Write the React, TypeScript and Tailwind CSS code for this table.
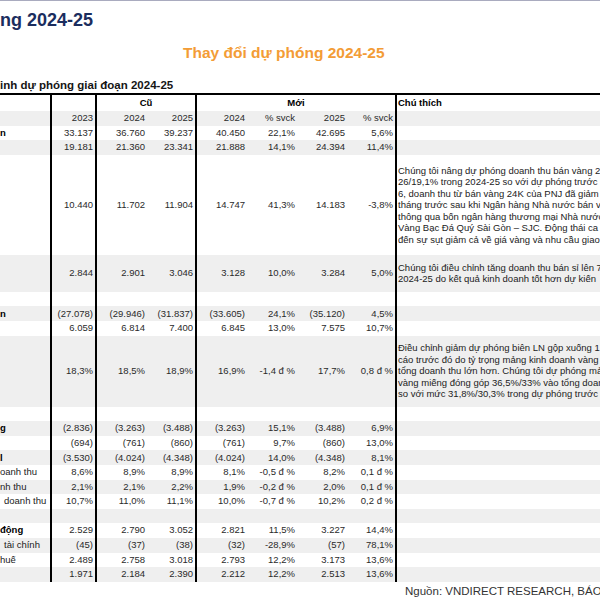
import React from "react";

type Row = {
    label?: string;
    bold?: boolean;
    indent?: boolean;
    vals?: string[];
    note?: string[];
    h?: string;
};

const rows: Row[] = [
    { label: "n", bold: true, vals: ["33.137", "36.760", "39.237", "40.450", "22,1%", "42.695", "5,6%"] },
    { vals: ["19.181", "21.360", "23.341", "21.888", "14,1%", "24.394", "11,4%"] },
    {
        vals: ["10.440", "11.702", "11.904", "14.747", "41,3%", "14.183", "-3,8%"],
        h: "h-[100px]",
        note: [
            "Chúng tôi nâng dự phóng doanh thu bán vàng 24",
            "26/19,1% trong 2024-25 so với dự phóng trước",
            "6, doanh thu từ bán vàng 24K của PNJ đã giảm",
            "tháng trước sau khi Ngân hàng Nhà nước bán v",
            "thông qua bốn ngân hàng thương mại Nhà nước",
            "Vàng Bạc Đá Quý Sài Gòn – SJC. Động thái ca",
            "đến sự sụt giảm cả về giá vàng và nhu cầu giao",
        ],
    },
    {
        vals: ["2.844", "2.901", "3.046", "3.128", "10,0%", "3.284", "5,0%"],
        h: "h-[37px]",
        note: [
            "Chúng tôi điều chỉnh tăng doanh thu bán sỉ lên 7",
            "2024-25 do kết quả kinh doanh tốt hơn dự kiến",
        ],
    },
    {},
    { label: "n", bold: true, vals: ["(27.078)", "(29.946)", "(31.837)", "(33.605)", "24,1%", "(35.120)", "4,5%"] },
    { vals: ["6.059", "6.814", "7.400", "6.845", "13,0%", "7.575", "10,7%"] },
    {
        vals: ["18,3%", "18,5%", "18,9%", "16,9%", "-1,4 đ %", "17,7%", "0,8 đ %"],
        h: "h-[71px]",
        note: [
            "Điều chỉnh giảm dự phóng biên LN gộp xuống 1",
            "cáo trước đó do tỷ trọng mảng kinh doanh vàng",
            "tổng doanh thu lớn hơn. Chúng tôi dự phóng mả",
            "vàng miếng đóng góp 36,5%/33% vào tổng doan",
            "so với mức 31,8%/30,3% trong dự phóng trước",
        ],
    },
    {},
    { label: "g", bold: true, vals: ["(2.836)", "(3.263)", "(3.488)", "(3.263)", "15,1%", "(3.488)", "6,9%"] },
    { vals: ["(694)", "(761)", "(860)", "(761)", "9,7%", "(860)", "13,0%"] },
    { label: "l", bold: true, vals: ["(3.530)", "(4.024)", "(4.348)", "(4.024)", "14,0%", "(4.348)", "8,1%"] },
    { label: "oanh thu", vals: ["8,6%", "8,9%", "8,9%", "8,1%", "-0,5 đ %", "8,2%", "0,1 đ %"] },
    { label: "nh thu", vals: ["2,1%", "2,1%", "2,2%", "1,9%", "-0,2 đ %", "2,0%", "0,1 đ %"] },
    { label: "doanh thu", indent: true, vals: ["10,7%", "11,0%", "11,1%", "10,0%", "-0,7 đ %", "10,2%", "0,2 đ %"] },
    {},
    { label: "động", bold: true, vals: ["2.529", "2.790", "3.052", "2.821", "11,5%", "3.227", "14,4%"] },
    { label: "tài chính", indent: true, vals: ["(45)", "(37)", "(38)", "(32)", "-28,9%", "(57)", "78,1%"] },
    { label: "huế", vals: ["2.489", "2.758", "3.018", "2.793", "12,2%", "3.173", "13,6%"] },
    { vals: ["1.971", "2.184", "2.390", "2.212", "12,2%", "2.513", "13,6%"] },
];

const grid = "grid grid-cols-[52px_45px_50px_50px_50px_50px_50px_50px_1fr]";
const edge = [0, 2, 6]; // value columns with a thick right rule

function TableRow({ row, gray }: { row: Row; gray: boolean }) {
    const vals = row.vals ?? ["", "", "", "", "", "", ""];
    return (
        <div className={`${grid} ${row.h ?? "h-[14.6px]"} ${gray ? "bg-[#efefef]" : "bg-white"}`}>
            <div
                className={`flex items-center whitespace-nowrap border-r-2 border-black ${row.indent ? "pl-[4px]" : ""} ${row.bold ? "font-bold text-black" : "text-[#222]"}`}
            >
                {row.label}
            </div>
            {vals.map((v, i) => (
                <div
                    key={i}
                    className={`flex items-center justify-end whitespace-nowrap pr-[2px] text-[#2a2a2a] ${edge.includes(i) ? "border-r-2 border-black" : ""}`}
                >
                    {v}
                </div>
            ))}
            <div className="flex flex-col justify-center pl-[1px] leading-[11.5px] text-[#222]">
                {row.note?.map((line, i) => (
                    <span key={i} className="whitespace-nowrap">
                        {line}
                    </span>
                ))}
            </div>
        </div>
    );
}

export default function App() {
    return (
        <div className="w-[600px] h-[600px] overflow-hidden bg-white border-t border-[#a9abbf] font-['Liberation_Sans',Arial,sans-serif]">
            <h1 className="mt-[9px] text-[18px] leading-[21px] font-bold text-[#1b2d5e] whitespace-nowrap">
                ng 2024-25
            </h1>
            <h2 className="mt-[13px] pl-[183px] text-[15.5px] leading-[18px] font-bold text-[#f39c36] whitespace-nowrap">
                Thay đổi dự phóng 2024-25
            </h2>
            <p className="mt-[16px] text-[11.5px] leading-[14px] font-bold text-[#151515] whitespace-nowrap">
                inh dự phóng giai đoạn 2024-25
            </p>

            <div className="mt-[1px] border-t-2 border-black text-[9.5px]">
                <div className={`${grid} h-[16px] font-bold text-black`}>
                    <div className="border-r-2 border-black" />
                    <div className="border-r-2 border-black" />
                    <div className="col-span-2 flex items-center justify-center border-r-2 border-black">Cũ</div>
                    <div className="col-span-4 flex items-center justify-center border-r-2 border-black">Mới</div>
                    <div className="flex items-center pl-[1px]">Chú thích</div>
                </div>
                <TableRow row={{ vals: ["2023", "2024", "2025", "2024", "% svck", "2025", "% svck"] }} gray />
                {rows.map((row, i) => (
                    <TableRow key={i} row={row} gray={i % 2 === 1} />
                ))}
            </div>

            <p className="mt-[2px] pl-[405px] text-[11.5px] leading-[14px] text-[#333] whitespace-nowrap">
                Nguồn: VNDIRECT RESEARCH, BÁO
            </p>
        </div>
    );
}
